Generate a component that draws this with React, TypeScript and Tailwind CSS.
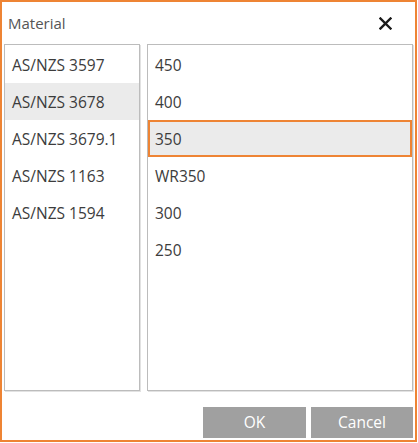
import React from "react";

const standards = ["AS/NZS 3597", "AS/NZS 3678", "AS/NZS 3679.1", "AS/NZS 1163", "AS/NZS 1594"];
const grades = ["450", "400", "350", "WR350", "300", "250"];

export default function App() {
  const font = { fontFamily: '"Open Sans", "Noto Sans", "Liberation Sans", sans-serif' };
  return (
    <div
      className="w-[417px] h-[442px] border-2 border-[#ee8434] bg-white flex flex-col text-[#3c3c3c]"
      style={font}
    >
      <div className="h-[42px] flex items-center justify-between pl-[6px] pr-[22px]">
        <span className="text-[15px] text-[#555555]">Material</span>
        <svg width="13" height="13" viewBox="0 0 13 13" className="mt-[1px] mr-[1px]">
          <path d="M1.5 1.5 L11.5 11.5 M11.5 1.5 L1.5 11.5" stroke="#1a1a1a" strokeWidth="2.4" strokeLinecap="square" />
        </svg>
      </div>
      <div className="flex gap-[7px] pl-[2px] pr-[2px]">
        <div className="w-[136px] h-[347px] border border-[#bcbcbc] shadow-[1px_1px_0_#e2e2e2] pt-[1px]">
          {standards.map((s, i) => (
            <div
              key={s}
              className={
                "h-[37px] flex items-center pl-[7px] pt-[3px] text-[15.5px] " +
                (i === 1 ? "bg-[#ebebeb]" : "")
              }
            >
              {s}
            </div>
          ))}
        </div>
        <div className="w-[266px] h-[347px] border border-[#bcbcbc] shadow-[1px_1px_0_#e2e2e2] pt-[1px]">
          {grades.map((g, i) => (
            <div
              key={g}
              className={
                "h-[37px] flex items-center pt-[3px] text-[15.5px] " +
                (i === 2 ? "bg-[#ebebeb] border-2 border-[#ee8434] pl-[5px]" : "pl-[7px]")
              }
            >
              {g}
            </div>
          ))}
        </div>
      </div>
      <div className="flex justify-end gap-[5px] pt-[16px] pr-[2px]">
        <button className="w-[103px] h-[31px] bg-[#a0a0a0] text-white text-[15.5px] flex items-center justify-center">
          OK
        </button>
        <button className="w-[102px] h-[31px] bg-[#a0a0a0] text-white text-[15.5px] flex items-center justify-center">
          Cancel
        </button>
      </div>
    </div>
  );
}
